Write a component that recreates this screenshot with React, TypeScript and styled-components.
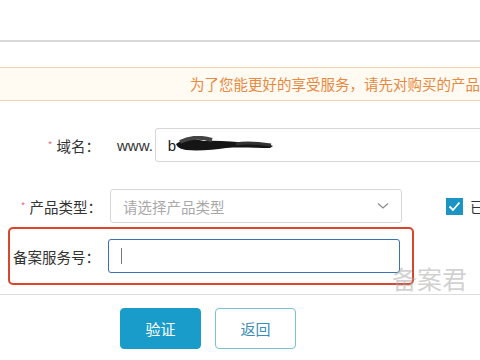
import styled, { createGlobalStyle } from "styled-components"

const Global = createGlobalStyle`
    body {
        margin: 0;
        background: #fff;
        font-family: "Noto Sans CJK SC", "Liberation Sans", sans-serif;
        color: #333;
    }
`

const Page = styled.div`
    position: relative;
    width: 480px;
    height: 360px;
    overflow: hidden;
`
const TopBar = styled.div`
    height: 40px;
    border-bottom: 2px solid #dadada;
`
const Notice = styled.div`
    margin-top: 25px;
    height: 32px;
    line-height: 32px;
    padding-left: 190px;
    border-top: 1px solid #f0d2b9;
    border-bottom: 1px solid #f0d2b9;
    background: #fffaf2;
    color: #e8893f;
    font-size: 14.5px;
    white-space: nowrap;
    overflow: hidden;
`
const Form = styled.div`
    padding-top: 27px;
`
const Row = styled.div<{ $gap?: number }>`
    display: flex;
    align-items: center;
    height: 34px;
    margin-bottom: ${p => p.$gap ?? 0}px;
    white-space: nowrap;
`
const Label = styled.label<{ $w?: number }>`
    width: ${p => p.$w ?? 102}px;
    flex: none;
    margin-right: 8px;
    text-align: right;
    font-size: 14.5px;
    white-space: nowrap;
`
const Star = styled.span`
    color: #e8708a;
    font-size: 10px;
    margin-right: 4px;
    vertical-align: 3px;
`
const Prefix = styled.span`
    flex: none;
    font-family: "Liberation Sans", sans-serif;
    font-size: 15px;
    margin: 0 2px 0 9px;
`
const Field = styled.div<{ $w: number; $focus?: boolean }>`
    box-sizing: border-box;
    width: ${p => p.$w}px;
    height: 34px;
    flex: none;
    display: flex;
    align-items: center;
    padding: 0 12px;
    border: 1px solid ${p => (p.$focus ? "#3a72b5" : "#d6d6d6")};
    border-radius: 3px;
    background: #fff;
    font-size: 14.5px;
`
const Value = styled.span`
    font-family: "Liberation Sans", sans-serif;
    font-size: 15px;
    color: #222;
`
const Placeholder = styled.span`
    flex: 1;
    color: #a8a8a8;
`
const Caret = styled.span`
    width: 1px;
    height: 16px;
    background: #777;
`
const Check = styled.div`
    flex: none;
    display: flex;
    align-items: center;
    margin-left: 44px;
    font-size: 14.5px;
    gap: 7px;
`
const Box = styled.span`
    width: 17px;
    height: 17px;
    background: #1c95c4;
    display: flex;
    align-items: center;
    justify-content: center;
`
const Highlight = styled.div`
    box-sizing: border-box;
    width: 406px;
    height: 58px;
    margin: 4px 0 0 8px;
    padding: 10px 0 0;
    border: 2px solid #d9462b;
    border-radius: 5px;
`
const Divider = styled.div`
    margin-top: 9px;
    border-top: 1px solid #dcdcdc;
`
const Actions = styled.div`
    display: flex;
    gap: 14px;
    padding: 13px 0 0 120px;
`
const Button = styled.button<{ $primary?: boolean }>`
    width: 81px;
    height: 41px;
    border-radius: 4px;
    font-family: inherit;
    font-size: 15px;
    border: 1px solid ${p => (p.$primary ? "#1a9ccb" : "#7cc0d6")};
    background: ${p => (p.$primary ? "#1a9ccb" : "#fff")};
    color: ${p => (p.$primary ? "#fff" : "#3a8db5")};
`
const Watermark = styled.div`
    position: absolute;
    left: 392px;
    top: 260px;
    font-size: 25px;
    color: rgba(170, 170, 170, 0.55);
`

export default function App() {
    return (
        <Page>
            <Global />
            <TopBar />
            <Notice>为了您能更好的享受服务，请先对购买的产品</Notice>
            <Form>
                <Row $gap={27}>
                    <Label $w={100}>
                        <Star>*</Star>域名：
                    </Label>
                    <Prefix>www.</Prefix>
                    <Field $w={340}>
                        <Value>b</Value>
                        <svg width="100" height="18" viewBox="0 0 100 18">
                            <path
                                d="M0 8 C6 3 16 2 28 5 C42 4 58 6 74 7 C84 7 92 8 97 10 L94 12 C80 12 64 11 50 12 C38 14 22 15 10 14 C4 13 1 11 0 8 Z"
                                fill="#151515"
                            />
                            <path d="M4 6 C14 1 26 1 36 4" stroke="#444" strokeWidth="4" fill="none" />
                            <path d="M60 8 C70 6 82 7 95 9" stroke="#333" strokeWidth="3" fill="none" />
                        </svg>
                    </Field>
                </Row>
                <Row>
                    <Label>
                        <Star>*</Star>产品类型：
                    </Label>
                    <Field $w={292}>
                        <Placeholder>请选择产品类型</Placeholder>
                        <svg width="12" height="8" viewBox="0 0 12 8">
                            <path d="M1 1.5 L6 6 L11 1.5" stroke="#888" strokeWidth="1.1" fill="none" />
                        </svg>
                    </Field>
                    <Check>
                        <Box>
                            <svg width="13" height="11" viewBox="0 0 13 11">
                                <path d="M1.5 5.5 L5 9 L11.5 1.5" stroke="#fff" strokeWidth="1.8" fill="none" />
                            </svg>
                        </Box>
                        已
                    </Check>
                </Row>
                <Highlight>
                    <Row>
                        <Label $w={90}>备案服务号：</Label>
                        <Field $w={292} $focus>
                            <Caret />
                        </Field>
                    </Row>
                </Highlight>
                <Divider />
                <Actions>
                    <Button $primary>验证</Button>
                    <Button>返回</Button>
                </Actions>
            </Form>
            <Watermark>备案君</Watermark>
        </Page>
    )
}
